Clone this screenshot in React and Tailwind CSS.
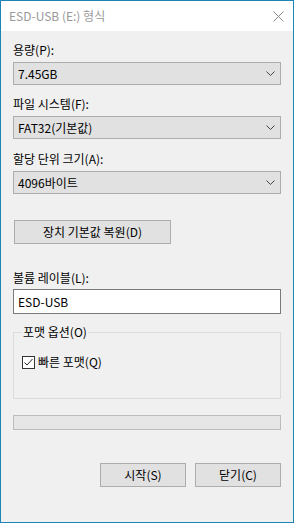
import React from "react";

const font = { fontFamily: '"Noto Sans CJK KR", "Noto Sans", sans-serif' };

function Chevron() {
  return (
    <svg width="9" height="6" viewBox="0 0 9 6" className="shrink-0">
      <path d="M0.5 0.5 L4.5 4.5 L8.5 0.5" fill="none" stroke="#444" strokeWidth="1" />
    </svg>
  );
}

function Select({ value }) {
  return (
    <div className="flex h-[23px] items-center justify-between border border-[#adadad] bg-[#e1e1e1] pl-[4px] pr-[5px]">
      <span className="text-[12px] leading-[16px] text-black">{value}</span>
      <Chevron />
    </div>
  );
}

function Label({ children, className = "" }) {
  return <div className={`text-[12px] leading-[16px] text-black ${className}`}>{children}</div>;
}

function Button({ children, className = "" }) {
  return (
    <div
      className={`flex h-[24px] items-center justify-center border border-[#adadad] bg-[#e1e1e1] text-[12px] leading-[16px] text-black ${className}`}
    >
      {children}
    </div>
  );
}

export default function App() {
  return (
    <div style={font} className="flex h-[523px] w-[294px] flex-col border border-[#1c84b6] bg-[#f0f0f0]">
      {/* title bar */}
      <div className="flex h-[30px] shrink-0 items-center justify-between bg-white pl-[8px] pr-[9px]">
        <span className="text-[12px] leading-[16px] text-[#999999]">ESD-USB (E:) 형식</span>
        <svg width="11" height="11" viewBox="0 0 11 11">
          <path d="M0.5 0.5 L10.5 10.5 M10.5 0.5 L0.5 10.5" stroke="#8a8a8a" strokeWidth="1" />
        </svg>
      </div>

      <div className="flex flex-1 flex-col px-[12px]">
        <Label className="mt-[11px]">용량(P):</Label>
        <div className="mt-[4px]">
          <Select value="7.45GB" />
        </div>

        <Label className="mt-[11px]">파일 시스템(F):</Label>
        <div className="mt-[4px]">
          <Select value="FAT32(기본값)" />
        </div>

        <Label className="mt-[12px]">할당 단위 크기(A):</Label>
        <div className="mt-[4px]">
          <Select value="4096바이트" />
        </div>

        <Button className="mt-[26px] ml-[1px] w-[157px]">장치 기본값 복원(D)</Button>

        <Label className="mt-[26px]">볼륨 레이블(L):</Label>
        <div className="mt-[3px] flex h-[25px] items-center border border-[#7a7a7a] bg-white px-[4px] text-[12px] leading-[16px] text-black">
          ESD-USB
        </div>

        {/* group box */}
        <fieldset className="mt-[10px] h-[75px] border border-[#dcdcdc] pl-[8px] pr-[8px]">
          <legend className="px-[1px] text-[12px] leading-[16px] text-black">포맷 옵션(O)</legend>
          <label className="mt-[14px] flex items-center gap-[3px] text-[12px] leading-[16px] text-black">
            <span className="flex h-[13px] w-[13px] items-center justify-center border border-[#333333] bg-white">
              <svg width="11" height="11" viewBox="0 0 11 11">
                <path d="M1.5 5.5 L4 8 L9.5 2" fill="none" stroke="#222" strokeWidth="1" />
              </svg>
            </span>
            빠른 포맷(Q)
          </label>
        </fieldset>

        {/* progress */}
        <div className="mt-[16px] h-[15px] border border-[#bcbcbc] bg-[#e6e6e6]" />

        <div className="mt-[33px] flex justify-end gap-[9px]">
          <Button className="w-[86px]">시작(S)</Button>
          <Button className="w-[86px]">닫기(C)</Button>
        </div>
      </div>
    </div>
  );
}
